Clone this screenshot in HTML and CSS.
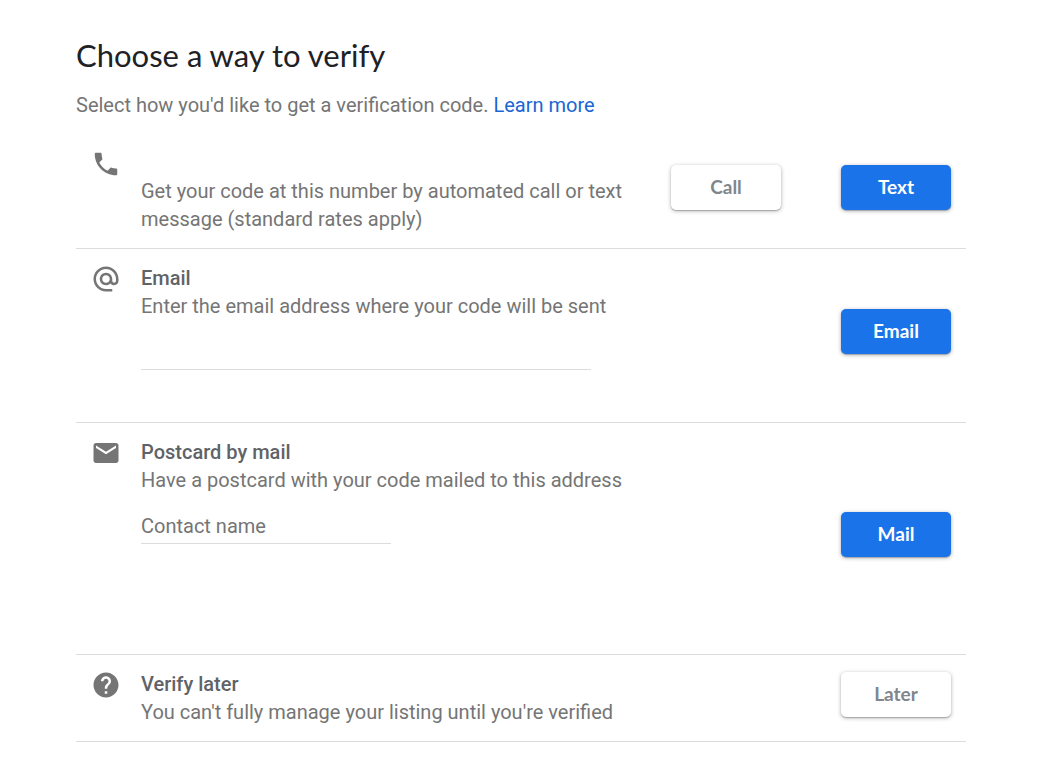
FILE: index.html
```
<!DOCTYPE html>
<html lang="en">
<head>
  <meta charset="UTF-8">
  <meta name="viewport" content="width=device-width, initial-scale=1.0">
  <title>Choose a way to verify</title>
  <link rel="stylesheet" href="styles.css">
</head>
<body>
  <main class="verify">
    <h1>Choose a way to verify</h1>
    <p class="intro">Select how you'd like to get a verification code. <a href="#">Learn more</a></p>

    <section class="option">
      <svg class="icon" viewBox="0 0 24 24" aria-hidden="true"><path d="M6.62 10.79c1.44 2.83 3.76 5.14 6.59 6.59l2.2-2.2c.27-.27.67-.36 1.02-.24 1.12.37 2.33.57 3.57.57.55 0 1 .45 1 1V20c0 .55-.45 1-1 1-9.39 0-17-7.61-17-17 0-.55.45-1 1-1h3.5c.55 0 1 .45 1 1 0 1.25.2 2.45.57 3.57.11.35.03.74-.25 1.02l-2.2 2.2z"/></svg>
      <div class="details">
        <p class="phone-number"></p>
        <p>Get your code at this number by automated call or text message (standard rates apply)</p>
      </div>
      <div class="actions">
        <button type="button" class="btn">Call</button>
        <button type="button" class="btn primary">Text</button>
      </div>
    </section>

    <form class="option">
      <svg class="icon" viewBox="0 0 24 24" aria-hidden="true"><path d="M12 2C6.48 2 2 6.48 2 12s4.48 10 10 10h5v-2h-5c-4.34 0-8-3.66-8-8s3.66-8 8-8 8 3.66 8 8v1.43c0 .79-.71 1.57-1.5 1.57s-1.5-.78-1.5-1.57V12c0-2.76-2.24-5-5-5s-5 2.24-5 5 2.24 5 5 5c1.38 0 2.64-.56 3.54-1.47.65.89 1.77 1.47 2.96 1.47 1.97 0 3.5-1.6 3.5-3.57V12c0-5.52-4.48-10-10-10zm0 13c-1.66 0-3-1.34-3-3s1.34-3 3-3 3 1.34 3 3-1.34 3-3 3z"/></svg>
      <div class="details email-details">
        <label class="title" for="email">Email</label>
        <p>Enter the email address where your code will be sent</p>
        <input type="email" id="email">
      </div>
      <div class="actions">
        <button type="button" class="btn primary">Email</button>
      </div>
    </form>

    <form class="option">
      <svg class="icon" viewBox="0 0 24 24" aria-hidden="true"><path d="M20 4H4c-1.1 0-1.99.9-1.99 2L2 18c0 1.1.9 2 2 2h16c1.1 0 2-.9 2-2V6c0-1.1-.9-2-2-2zm0 4l-8 5-8-5V6l8 5 8-5v2z"/></svg>
      <div class="details mail-details">
        <h2 class="title">Postcard by mail</h2>
        <p>Have a postcard with your code mailed to this address</p>
        <input type="text" id="contact" class="short" placeholder="Contact name" aria-label="Contact name">
      </div>
      <div class="actions">
        <button type="button" class="btn primary">Mail</button>
      </div>
    </form>

    <section class="option">
      <svg class="icon" viewBox="0 0 24 24" aria-hidden="true"><path d="M12 2C6.48 2 2 6.48 2 12s4.48 10 10 10 10-4.48 10-10S17.520 2 12 2zm1 17h-2v-2h2v2zm2.070-7.750l-.9.920C13.450 12.900 13 13.500 13 15h-2v-.5c0-1.100.45-2.100 1.170-2.830l1.240-1.260c.37-.36.59-.86.59-1.410 0-1.100-.9-2-2-2s-2 .9-2 2H8c0-2.210 1.790-4 4-4s4 1.790 4 4c0 .88-.36 1.680-.93 2.250z"/></svg>
      <div class="details">
        <h2 class="title">Verify later</h2>
        <p>You can't fully manage your listing until you're verified</p>
      </div>
      <div class="actions">
        <button type="button" class="btn">Later</button>
      </div>
    </section>
  </main>
</body>
</html>
```
FILE: styles.css
```
:root{
  --blue:#1a73e8;
  --link:#1967d2;
  --grey:#757575;
  --line:#dadce0;
}
*{
  padding:0;
  margin:0;
  box-sizing:border-box;
}
body{
  background-color:#fff;
  color:var(--grey);
  font-family:Roboto, sans-serif;
  font-size:20px;
  line-height:28px;
}
.verify{
  padding:35px 87px 40px 76px;
}
h1{
  color:#202124;
  font-family:Lato, sans-serif;
  font-size:31px;
  font-weight:400;
  line-height:40px;
}
.intro{
  margin:16px 0 15px;
}
a{
  color:var(--link);
  text-decoration:none;
}
.option{
  display:flex;
  gap:20px;
  padding:15px;
  border-bottom:1px solid var(--line);
}
.icon{
  width:30px;
  height:30px;
  flex-shrink:0;
  fill:var(--grey);
}
.details{
  flex:1;
  max-width:500px;
}
.phone-number{
  height:28px;
}
.title{
  display:block;
  color:#5f6368;
  font-size:20px;
  font-weight:500;
}
.email-details{
  padding-bottom:37px;
}
.mail-details{
  padding-bottom:95px;
}
input{
  display:block;
  width:100%;
  max-width:450px;
  height:36px;
  margin-top:14px;
  border:none;
  border-bottom:1px solid var(--line);
  outline:none;
  background:none;
  color:#202124;
  font:inherit;
}
input.short{
  max-width:250px;
}
input::placeholder{
  color:var(--grey);
  opacity:1;
}
input:focus{
  border-color:var(--blue);
}
.actions{
  display:flex;
  align-self:center;
  gap:60px;
  margin-left:auto;
  margin-bottom:8px;
}
.btn{
  width:110px;
  height:45px;
  padding-bottom:2px;
  border:none;
  border-radius:5px;
  background-color:#fff;
  box-shadow:0 1px 4px rgba(0,0,0,.3), 0 1px 1px rgba(0,0,0,.2);
  color:#80868b;
  font-family:Lato, sans-serif;
  font-size:19px;
  font-weight:700;
  cursor:pointer;
}
.btn.primary{
  background-color:var(--blue);
  color:#fff;
}
```
